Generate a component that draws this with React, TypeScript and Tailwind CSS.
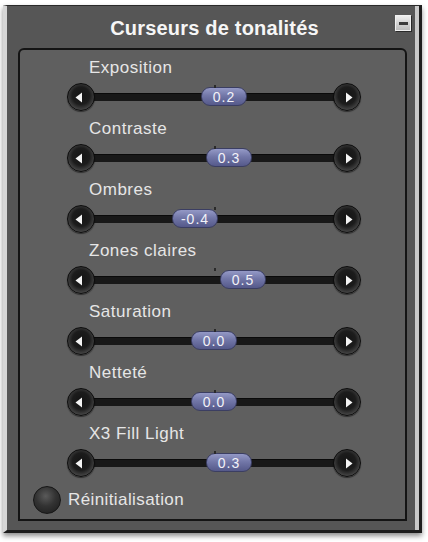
const sliders = [
  { label: 'Exposition', value: '0.2', offset: 10 },
  { label: 'Contraste', value: '0.3', offset: 15 },
  { label: 'Ombres', value: '-0.4', offset: -19 },
  { label: 'Zones claires', value: '0.5', offset: 29 },
  { label: 'Saturation', value: '0.0', offset: 0 },
  { label: 'Netteté', value: '0.0', offset: 0 },
  { label: 'X3 Fill Light', value: '0.3', offset: 15 },
];

const ArrowButton = ({ dir }: { dir: 'left' | 'right' }) => (
  <div className="relative z-10 flex h-[28px] w-[28px] items-center justify-center rounded-full border border-[#0c0c0c] bg-[radial-gradient(circle_at_50%_45%,#141414_0%,#1c1c1c_45%,#4c4c4c_78%,#222_100%)] shadow-[0_1px_1px_rgba(0,0,0,0.5)]">
    <svg width="10" height="11" viewBox="0 0 10 11" className={dir === 'left' ? '-ml-[4px]' : 'ml-[4px]'}>
      {dir === 'left' ? (
        <polygon points="8,0.5 8,10.5 1.5,5.5" fill="#f4f4f4" />
      ) : (
        <polygon points="2,0.5 2,10.5 8.5,5.5" fill="#f4f4f4" />
      )}
    </svg>
  </div>
);

const SliderRow = ({ label, value, offset }: { label: string; value: string; offset: number }) => (
  <div className="flex flex-col">
    <div className="ml-[69px] h-[20px] text-[17px] leading-[20px] tracking-[0.5px] text-[#e6e6e6]">{label}</div>
    <div className="relative mb-[8px] ml-[47px] mt-[5px] flex h-[28px] w-[294px] items-center justify-between">
      <div className="absolute left-[14px] right-[14px] top-[10px] h-[8px] bg-[#181818] shadow-[inset_0_1px_0_#0a0a0a]" />
      <ArrowButton dir="left" />
      <div
        className="absolute top-[4px] z-10 flex h-[19px] w-[46px] items-center justify-center rounded-[9px] border border-[#3b3e62] bg-[linear-gradient(180deg,#9499c6_0%,#7277a8_45%,#55598a_100%)] text-[14px] leading-none tracking-[1px] text-[#f2f2f8]"
        style={{ left: 147 + offset - 23 }}
      >
        {value}
      </div>
      <div className="absolute left-[147px] top-[2px] z-20 h-[3px] w-[2px] bg-[#2a2a2a]" />
      <ArrowButton dir="right" />
    </div>
  </div>
);

export default function App() {
  return (
    <div className="h-[542px] w-[428px] bg-white pl-[3px] pt-[5px] font-['Liberation_Sans',Arial,sans-serif]">
      <div className="relative h-[528px] w-[419px] border-b-[3px] border-l-[4px] border-r-[3px] border-t border-b-[#1c1c1c] border-l-[#d6d6d6] border-r-[#1e1e1e] border-t-[#2a2a2a] bg-[#565656] shadow-[inset_-4px_0_0_#c9c9c9,0_3px_5px_rgba(0,0,0,0.45)]">
        <div className="pl-[3px] pt-[10px] text-center text-[20px] font-bold leading-[24px] tracking-[0.2px] text-[#f6f6f6]">
          Curseurs de tonalités
        </div>
        <div className="absolute right-[8px] top-[9px] flex h-[16px] w-[16px] items-center justify-center border border-[#f0f0f0] bg-[linear-gradient(180deg,#ececec,#bcbcbc)] shadow-[1px_1px_0_#2a2a2a]">
          <div className="h-[3px] w-[9px] bg-[#3a3a3a]" />
        </div>
        <div className="ml-[11px] mt-[8px] flex h-[473px] w-[389px] flex-col rounded-t-[6px] border-2 border-[#141414] bg-[#5f5f5f] pt-[8px]">
          {sliders.map((s) => (
            <SliderRow key={s.label} {...s} />
          ))}
          <div className="mt-[1px] flex h-[28px] items-center">
            <div className="ml-[13px] h-[28px] w-[28px] rounded-full border border-[#161616] bg-[radial-gradient(circle_at_45%_35%,#5a5a5a_0%,#333_45%,#1a1a1a_100%)]" />
            <div className="ml-[7px] text-[17px] leading-[20px] tracking-[0.4px] text-[#e6e6e6]">Réinitialisation</div>
          </div>
        </div>
      </div>
    </div>
  );
}
